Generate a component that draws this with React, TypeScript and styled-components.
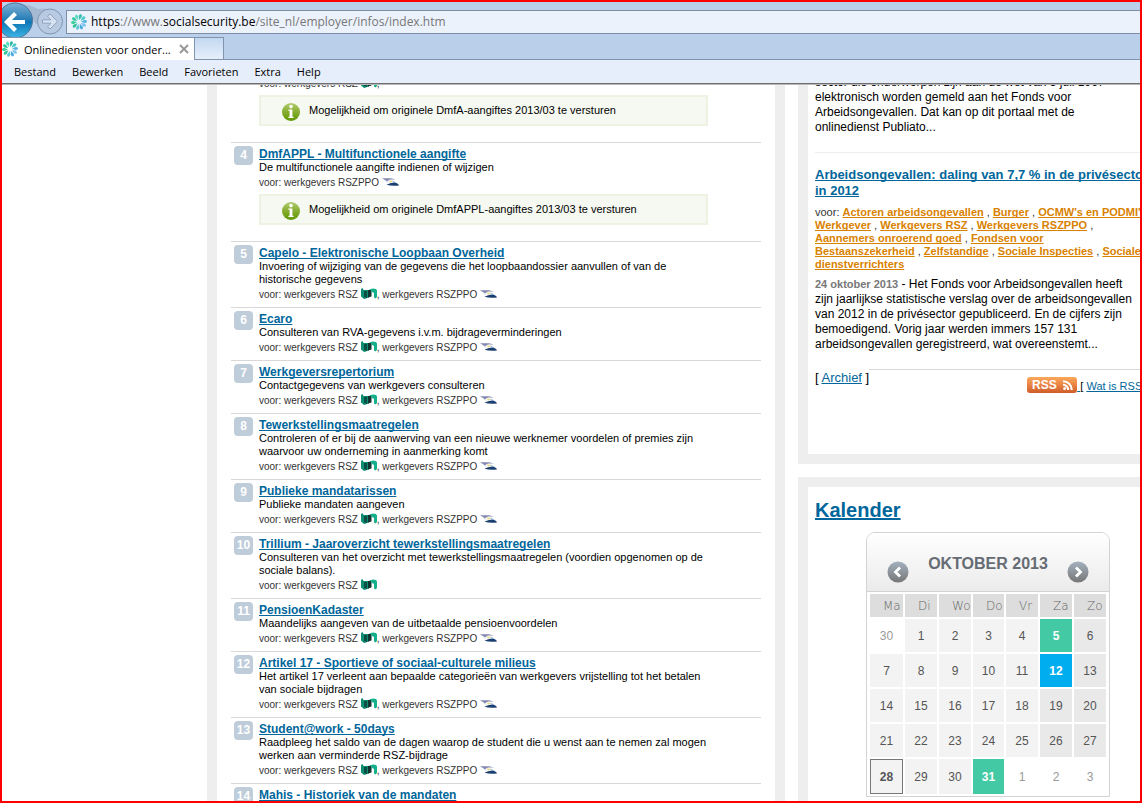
import React from "react";
import styled, { createGlobalStyle } from "styled-components";

const Global = createGlobalStyle`
  * { box-sizing: border-box; }
  body { margin: 0; background: #fff; font-family: "Liberation Sans", Arial, sans-serif; color: #000; }
  a { color: #00669b; text-decoration-skip-ink: none; }
  h2, h3, p, ol, ul { margin: 0; padding: 0; }
`;

const Shell = styled.div`
  height: 100vh;
  border: 2px solid #f00;
  display: flex;
  flex-direction: column;
  overflow: hidden;
`;

const Chrome = styled.header`
  flex: none;
  background: #bad0ea;
  font-family: "Open Sans", "Noto Sans", sans-serif;
`;

const AddressRow = styled.div`
  display: flex;
  height: 35px;
  align-items: center;
`;

const NavButton = styled.button<{ $width: number }>`
  border: 0;
  padding: 0;
  background: none;
  width: ${(p) => p.$width}px;
  height: 35px;
  flex: none;
  svg { display: block; overflow: visible; }
`;

const AddressField = styled.div`
  flex: 1;
  height: 24px;
  margin-top: 5px;
  display: flex;
  align-items: center;
  gap: 4px;
  padding-left: 4px;
  background: #ecf2fb;
  border: 1px solid #7d8ea6;
  border-right: 0;
  font-size: 12px;
  line-height: 20px;
  color: #777;
  white-space: nowrap;
  b { font-weight: 400; color: #000; }
`;

const TabRow = styled.div`
  position: relative;
  display: flex;
  height: 23px;
  border-bottom: 1px solid #8094b0;
`;

const Tab = styled.div`
  display: flex;
  align-items: center;
  width: 193px;
  height: 23px;
  background: #fff;
  border: 1px solid #8094b0;
  border-width: 1px 1px 0 0;
  font-size: 11px;
  white-space: nowrap;
  span { flex: 1; padding-left: 6px; }
`;

const CloseButton = styled.button`
  border: 0;
  padding: 0;
  margin-right: 5px;
  background: none;
  width: 10px;
  height: 10px;
  svg { display: block; }
`;

const NewTab = styled.button`
  width: 29px;
  height: 22px;
  padding: 0;
  border: 1px solid #8094b0;
  border-width: 1px 1px 0 0;
  background: linear-gradient(#c3d8f1, #e6effa);
`;

const MenuBar = styled.nav`
  display: flex;
  gap: 16px;
  height: 24px;
  padding-left: 12px;
  background: #e7eefb;
  border-bottom: 1px solid #6e6e6e;
  box-shadow: 0 1px 0 #b8b8b8;
  position: relative;
`;

const MenuButton = styled.button`
  border: 0;
  padding: 0;
  background: none;
  color: #000;
  font: 11px/22px "Open Sans", "Noto Sans", sans-serif;
`;

const Page = styled.div`
  flex: 1;
  min-height: 0;
  display: flex;
  align-items: flex-start;
  gap: 13px;
  padding-left: 205px;
  overflow: hidden;
`;

const Services = styled.main`
  flex: none;
  width: 578px;
  border: 10px solid #eee;
  border-width: 0 10px;
  padding: 0 14px;
`;

const ServiceList = styled.ol`
  list-style: none;
  margin-top: -13px;
`;

const ServiceItem = styled.li`
  display: flex;
  gap: 6px;
  padding: 3px 3px 3px;
  & + & { border-top: 1px solid #d8d8d8; }
`;

const Badge = styled.span<{ $hidden?: boolean }>`
  flex: none;
  width: 19px;
  height: 19px;
  border-radius: 4px;
  background: ${(p) => (p.$hidden ? "transparent" : "#bfccda")};
  color: #fff;
  font-size: 12px;
  line-height: 19px;
  font-weight: 700;
  text-align: center;
`;

const ServiceBody = styled.div`
  width: 449px;
  padding-top: 1px;
  white-space: nowrap;
`;

const ServiceTitle = styled.h3`
  font-size: 12px;
  line-height: 14px;
`;

const ServiceText = styled.p`
  font-size: 11px;
  line-height: 13px;
`;

const Audience = styled.p`
  font-size: 10px;
  line-height: 18px;
  height: 18px;
  color: #333;
  svg { vertical-align: -1px; }
`;

const Notice = styled.div`
  display: flex;
  align-items: center;
  gap: 9px;
  height: 31px;
  margin: 2px 0 13px;
  padding: 2px 21px 0;
  background: #f6f9f2;
  border: 2px solid #edf2e2;
  font-size: 11px;
  span { padding-bottom: 4px; }
`;

const Aside = styled.aside`
  flex: none;
  width: 372px;
`;

const Panel = styled.section<{ $first?: boolean }>`
  border: 10px solid #eee;
  border-top-width: ${(p) => (p.$first ? 0 : 10)}px;
  padding: 0 7px;
  margin-bottom: 13px;
  white-space: nowrap;
`;

const NewsText = styled.p`
  font-size: 12px;
  line-height: 15px;
  b { font-size: 11px; color: #777; }
`;

const NewsIntro = styled(NewsText)`
  margin-top: -9px;
  padding-bottom: 17px;
  border-bottom: 1px solid #eee;
`;

const NewsTitle = styled.h3`
  margin-top: 14px;
  font-size: 13px;
  line-height: 16px;
`;

const Tags = styled.p`
  margin: 7px 0 6px;
  font-size: 11px;
  line-height: 13px;
  color: #333;
  a { color: #d98200; font-weight: 700; }
`;

const PanelFooter = styled.div`
  display: flex;
  height: 85px;
  margin-top: 17px;
`;

const Archive = styled.p`
  font-size: 13px;
  line-height: 18px;
`;

const FeedLinks = styled.p`
  flex: 1;
  display: flex;
  align-items: flex-start;
  border-top: 1px solid #d8d8d8;
  padding: 7px 0 0 158px;
  font-size: 11px;
  line-height: 18px;
  svg { display: block; }
`;

const PanelTitle = styled.h2`
  padding-top: 10px;
  font-size: 20px;
  line-height: 26px;
`;

const Calendar = styled.div`
  width: 244px;
  margin: 9px 0 12px 51px;
  border: 1px solid #d3d3d3;
  border-radius: 9px 9px 0 0;
`;

const CalendarHeader = styled.div`
  display: flex;
  justify-content: space-between;
  height: 59px;
  padding: 0 20px;
  border-bottom: 1px solid #d3d3d3;
  border-radius: 8px 8px 0 0;
  background: linear-gradient(#fff, #ebebeb);
  color: #666c73;
  font-size: 16px;
  font-weight: 700;
  line-height: 61px;
`;

const StepButton = styled.button`
  border: 0;
  padding: 28px 0 0;
  background: none;
  height: 50px;
  svg { display: block; }
`;

const Days = styled.table`
  margin: 0 1px;
  width: 240px;
  table-layout: fixed;
  border-collapse: separate;
  border-spacing: 2px;
`;

const DayName = styled.th<{ $width: number }>`
  width: ${(p) => p.$width}px;
  height: 23px;
  padding: 0 0 0 13px;
  background: #ddd;
  color: #666;
  font: 12px/22px "DejaVu Sans", Verdana, sans-serif;
  font-weight: 200;
  text-align: left;
`;

type Kind = "out" | "day" | "weekend" | "green" | "blue" | "today";

const dayStyles: Record<Kind, string> = {
  out: "color: #999;",
  day: "background: #f3f3f3; color: #555;",
  weekend: "background: #e9e9e9; color: #555;",
  green: "background: #43caa4; color: #fff; font-weight: 700;",
  blue: "background: #00aeef; color: #fff; font-weight: 700;",
  today: "background: #f3f3f3; color: #555; font-weight: 700; border: 1px solid #777;",
};

const Day = styled.td<{ $kind: Kind; $tall: boolean }>`
  height: ${(p) => (p.$tall ? 35 : 33)}px;
  padding: 0;
  font-size: 12px;
  text-align: center;
  ${(p) => dayStyles[p.$kind]}
`;

const petals = ["#35b9ae", "#4cc9c8", "#58b4e4", "#7cc4ee", "#4aa9dc", "#62c8d8", "#33c39a", "#3fd0a0", "#2fc4a0", "#5fdcc0"];

const SiteIcon = () => (
  <svg width="16" height="16" viewBox="0 0 16 16" aria-hidden="true">
    {petals.map((c, i) => (
      <path key={i} d="M8 6 L6.4 2.2 Q6.8 -0.2 8.6 0 Q10 1 9.5 2.6 Z" fill={c} transform={`rotate(${i * 36 + 12} 8 8)`} />
    ))}
  </svg>
);

const BackIcon = () => (
  <svg width="34" height="35" viewBox="0 0 34 35" aria-hidden="true">
    <defs>
      <linearGradient id="back" x1="0" y1="0" x2="0" y2="1">
        <stop offset="0" stopColor="#7fb0d4" />
        <stop offset=".45" stopColor="#2a80b8" />
        <stop offset=".55" stopColor="#0f76b5" />
        <stop offset="1" stopColor="#3fb6e6" />
      </linearGradient>
    </defs>
    <path d="M18 2 Q30 3 36 7 Q46 5 56 10 L60 16 L34 22 Z" fill="#a6b9d2" />
    <circle cx="13" cy="18.5" r="17.5" fill="url(#back)" stroke="#4f7398" />
    <path d="M23 20 H6 M13.5 11.5 L5 20 L13.5 28.5" fill="none" stroke="#fff" strokeWidth="4.2" />
  </svg>
);

const ForwardIcon = () => (
  <svg width="30" height="35" viewBox="0 0 30 35" aria-hidden="true">
    <circle cx="14" cy="19.5" r="12.5" fill="#b7cae2" stroke="#8195b1" />
    <path d="M6.5 17.8 H15 L11.5 14.2 L14 12 L21.5 19.5 L14 27 L11.5 24.8 L15 21.2 H6.5 Z" fill="#d6e2f1" stroke="#8fa3bf" />
  </svg>
);

const RszIcon = () => (
  <svg width="16" height="11" viewBox="0 0 16 11" aria-hidden="true">
    <path d="M0 1 L1.5 0 L2.5 2 H8 L8 9.5 L3 11 L0 8.5 Z" fill="#0e8f74" />
    <path d="M3 3 H6 V10 L3 9 Z" fill="#0b4f45" />
    <path d="M7 2 H10.5 V8.5 L7 9.5 Z" fill="#12332f" />
    <path d="M8 1.5 L12 0.5 L15 1 L16 2.5 V9 L14.5 10.5 L13 9.5 V5 L11.5 4 L10.5 5 V2.5 Z" fill="#14b08c" />
  </svg>
);

const PpoIcon = () => (
  <svg width="17" height="9" viewBox="0 0 17 9" aria-hidden="true">
    <path d="M0 0.3 L9 0.3 L14 1.6 L8 1.6 L5 3.2 Z" fill="#8288b0" />
    <path d="M2.5 2 L5 3.2 L7 5.4 Z" fill="#9fb0cf" />
    <path d="M4.5 6.8 Q8 5 12 4.6 Q16 5 17 7.4 Q10 8.2 4.5 6.8 Z" fill="#1c3f72" />
    <path d="M7 2.6 L10.5 2.8 L9.5 4.6 L7.5 4.2 Z" fill="#e3d980" />
    <path d="M10 2.4 L14.5 4.8 L11.5 4.6 Z" fill="#7fa3cf" />
  </svg>
);

const InfoIcon = () => (
  <svg width="18" height="18" viewBox="0 0 18 18" aria-hidden="true">
    <defs>
      <linearGradient id="info" x1="0" y1="0" x2="0" y2="1">
        <stop offset="0" stopColor="#b2cc72" />
        <stop offset=".5" stopColor="#86ad30" />
        <stop offset="1" stopColor="#5f9800" />
      </linearGradient>
    </defs>
    <circle cx="9" cy="9" r="9" fill="url(#info)" />
    <circle cx="9" cy="3.6" r="1.8" fill="#fff" />
    <path d="M6.4 6.6 H10.4 V13.8 H11.6 V15 H6.4 V13.8 H7.6 V7.8 H6.4 Z" fill="#fff" />
  </svg>
);

const StepIcon = ({ next }: { next?: boolean }) => (
  <svg width="22" height="22" viewBox="0 0 22 22" aria-hidden="true">
    <defs>
      <linearGradient id="step" x1="0" y1="0" x2="0" y2="1">
        <stop offset="0" stopColor="#a3b1bf" />
        <stop offset="1" stopColor="#777" />
      </linearGradient>
    </defs>
    <circle cx="11" cy="11" r="10.5" fill="url(#step)" />
    <path d={next ? "M9 6.5 L13.5 11 L9 15.5" : "M13 6.5 L8.5 11 L13 15.5"} fill="none" stroke="#fff" strokeWidth="2.8" />
  </svg>
);

const RssBadge = () => (
  <svg width="50" height="16" viewBox="0 0 50 16" role="img" aria-label="RSS">
    <defs>
      <linearGradient id="rss" x1="0" y1="0" x2="0" y2="1">
        <stop offset="0" stopColor="#fba85b" />
        <stop offset=".5" stopColor="#ea8343" />
        <stop offset="1" stopColor="#cd5c2b" />
      </linearGradient>
    </defs>
    <rect width="50" height="16" rx="3" fill="url(#rss)" />
    <text x="5" y="12" fill="#fff" fontSize="12" fontWeight="700" fontFamily="Liberation Sans, sans-serif">RSS</text>
    <circle cx="37.6" cy="11.6" r="1.5" fill="#fff" />
    <path d="M36 7.8 A5.2 5.2 0 0 1 41.2 13 M36 4.2 A8.8 8.8 0 0 1 44.8 13" fill="none" stroke="#fff" strokeWidth="2" />
  </svg>
);

type Service = { n: number; title?: string; lines?: string[]; rsz: boolean; ppo: boolean; notice?: string };

const services: Service[] = [
  { n: 3, rsz: true, ppo: false, notice: "Mogelijkheid om originele DmfA-aangiftes 2013/03 te versturen" },
  { n: 4, title: "DmfAPPL - Multifunctionele aangifte", lines: ["De multifunctionele aangifte indienen of wijzigen"], rsz: false, ppo: true, notice: "Mogelijkheid om originele DmfAPPL-aangiftes 2013/03 te versturen" },
  { n: 5, title: "Capelo - Elektronische Loopbaan Overheid", lines: ["Invoering of wijziging van de gegevens die het loopbaandossier aanvullen of van de", "historische gegevens"], rsz: true, ppo: true },
  { n: 6, title: "Ecaro", lines: ["Consulteren van RVA-gegevens i.v.m. bijdrageverminderingen"], rsz: true, ppo: true },
  { n: 7, title: "Werkgeversrepertorium", lines: ["Contactgegevens van werkgevers consulteren"], rsz: true, ppo: true },
  { n: 8, title: "Tewerkstellingsmaatregelen", lines: ["Controleren of er bij de aanwerving van een nieuwe werknemer voordelen of premies zijn", "waarvoor uw onderneming in aanmerking komt"], rsz: true, ppo: true },
  { n: 9, title: "Publieke mandatarissen", lines: ["Publieke mandaten aangeven"], rsz: true, ppo: true },
  { n: 10, title: "Trillium - Jaaroverzicht tewerkstellingsmaatregelen", lines: ["Consulteren van het overzicht met tewerkstellingsmaatregelen (voordien opgenomen op de", "sociale balans)."], rsz: true, ppo: false },
  { n: 11, title: "PensioenKadaster", lines: ["Maandelijks aangeven van de uitbetaalde pensioenvoordelen"], rsz: true, ppo: true },
  { n: 12, title: "Artikel 17 - Sportieve of sociaal-culturele milieus", lines: ["Het artikel 17 verleent aan bepaalde categorieën van werkgevers vrijstelling tot het betalen", "van sociale bijdragen"], rsz: true, ppo: true },
  { n: 13, title: "Student@work - 50days", lines: ["Raadpleeg het saldo van de dagen waarop de student die u wenst aan te nemen zal mogen", "werken aan verminderde RSZ-bijdrage"], rsz: true, ppo: true },
  { n: 14, title: "Mahis - Historiek van de mandaten", rsz: true, ppo: true },
];

const Lines = ({ lines }: { lines: string[] }) => (
  <>
    {lines.map((l, i) => (
      <React.Fragment key={l}>
        {i > 0 && <br />}
        {l}
      </React.Fragment>
    ))}
  </>
);

const ServiceRow = ({ s }: { s: Service }) => (
  <ServiceItem>
    <Badge $hidden={!s.title}>{s.title ? s.n : ""}</Badge>
    <ServiceBody>
      {s.title && <ServiceTitle><a href="#dienst">{s.title}</a></ServiceTitle>}
      {s.lines && <ServiceText><Lines lines={s.lines} /></ServiceText>}
      <Audience>
        voor: {s.rsz && <>werkgevers RSZ <RszIcon /></>}
        {s.rsz && (s.ppo || !s.title) && ", "}
        {s.ppo && <>werkgevers RSZPPO <PpoIcon /></>}
      </Audience>
      {s.notice && <Notice><InfoIcon /><span>{s.notice}</span></Notice>}
    </ServiceBody>
  </ServiceItem>
);

const tagLines = [
  ["Actoren arbeidsongevallen", "Burger", "OCMW's en PODMI's"],
  ["Werkgever", "Werkgevers RSZ", "Werkgevers RSZPPO", ""],
  ["Aannemers onroerend goed", "Fondsen voor"],
  ["Bestaanszekerheid", "Zelfstandige", "Sociale Inspecties", "Sociale"],
  ["dienstverrichters"],
];

const dayNames: [string, number][] = [["Ma", 33], ["Di", 32], ["Wo", 32], ["Do", 31], ["Vr", 32], ["Za", 32], ["Zo", 32]];

const weeks = [
  [30, 1, 2, 3, 4, 5, 6],
  [7, 8, 9, 10, 11, 12, 13],
  [14, 15, 16, 17, 18, 19, 20],
  [21, 22, 23, 24, 25, 26, 27],
  [28, 29, 30, 31, 1, 2, 3],
];

const kindOf = (week: number, col: number, day: number): Kind => {
  if ((week === 0 && day > 20) || (week === 4 && day < 10)) return "out";
  if (day === 5 || day === 31) return "green";
  if (day === 12) return "blue";
  if (day === 28) return "today";
  return col > 4 ? "weekend" : "day";
};

export default function App() {
  return (
    <>
      <Global />
      <Shell>
        <Chrome>
          <AddressRow>
            <NavButton $width={34} aria-label="Vorige"><BackIcon /></NavButton>
            <NavButton $width={30} aria-label="Volgende"><ForwardIcon /></NavButton>
            <AddressField>
              <SiteIcon />
              <span><b>https</b>://www.<b>socialsecurity.be</b>/site_nl/employer/infos/index.htm</span>
            </AddressField>
          </AddressRow>
          <TabRow>
            <Tab>
              <SiteIcon />
              <span>Onlinediensten voor onder...</span>
              <CloseButton aria-label="Tabblad sluiten">
                <svg width="10" height="10" viewBox="0 0 10 10"><path d="M1 1 L9 9 M9 1 L1 9" stroke="#999" strokeWidth="2" /></svg>
              </CloseButton>
            </Tab>
            <NewTab aria-label="Nieuw tabblad" />
          </TabRow>
          <MenuBar>
            {["Bestand", "Bewerken", "Beeld", "Favorieten", "Extra", "Help"].map((m) => <MenuButton key={m}>{m}</MenuButton>)}
          </MenuBar>
        </Chrome>
        <Page>
          <Services>
            <ServiceList>
              {services.map((s) => <ServiceRow key={s.n} s={s} />)}
            </ServiceList>
          </Services>
          <Aside>
            <Panel $first>
              <NewsIntro>
                <Lines lines={["sector die onderworpen zijn aan de wet van 3 juli 1967", "elektronisch worden gemeld aan het Fonds voor", "Arbeidsongevallen. Dat kan op dit portaal met de", "onlinedienst Publiato..."]} />
              </NewsIntro>
              <NewsTitle><a href="#nieuws"><Lines lines={["Arbeidsongevallen: daling van 7,7 % in de privésector", "in 2012"]} /></a></NewsTitle>
              <Tags>
                voor:{" "}
                {tagLines.map((line, i) => (
                  <React.Fragment key={i}>
                    {i > 0 && <br />}
                    {line.map((t, j) => (
                      <React.Fragment key={j}>
                        {j > 0 && " , "}
                        {t && <a href="#doelgroep">{t}</a>}
                      </React.Fragment>
                    ))}
                  </React.Fragment>
                ))}
              </Tags>
              <NewsText>
                <b>24 oktober 2013</b> - <Lines lines={["Het Fonds voor Arbeidsongevallen heeft", "zijn jaarlijkse statistische verslag over de arbeidsongevallen", "van 2012 in de privésector gepubliceerd. En de cijfers zijn", "bemoedigend. Vorig jaar werden immers 157 131", "arbeidsongevallen geregistreerd, wat overeenstemt..."]} />
              </NewsText>
              <PanelFooter>
                <Archive>[ <a href="#archief">Archief</a> ]</Archive>
                <FeedLinks>
                  <a href="#rss"><RssBadge /></a>
                  <span><a href="#rss">&nbsp;</a>[ <a href="#wat-is-rss">Wat is RSS?</a> ]</span>
                </FeedLinks>
              </PanelFooter>
            </Panel>
            <Panel>
              <PanelTitle><a href="#kalender">Kalender</a></PanelTitle>
              <Calendar>
                <CalendarHeader>
                  <StepButton aria-label="Vorige maand"><StepIcon /></StepButton>
                  OKTOBER 2013
                  <StepButton aria-label="Volgende maand"><StepIcon next /></StepButton>
                </CalendarHeader>
                <Days>
                  <thead>
                    <tr>{dayNames.map(([d, w]) => <DayName key={d} $width={w}>{d}</DayName>)}</tr>
                  </thead>
                  <tbody>
                    {weeks.map((week, w) => (
                      <tr key={w}>
                        {week.map((d, c) => <Day key={c} $kind={kindOf(w, c, d)} $tall={w === 4}>{d}</Day>)}
                      </tr>
                    ))}
                  </tbody>
                </Days>
              </Calendar>
            </Panel>
          </Aside>
        </Page>
      </Shell>
    </>
  );
}
